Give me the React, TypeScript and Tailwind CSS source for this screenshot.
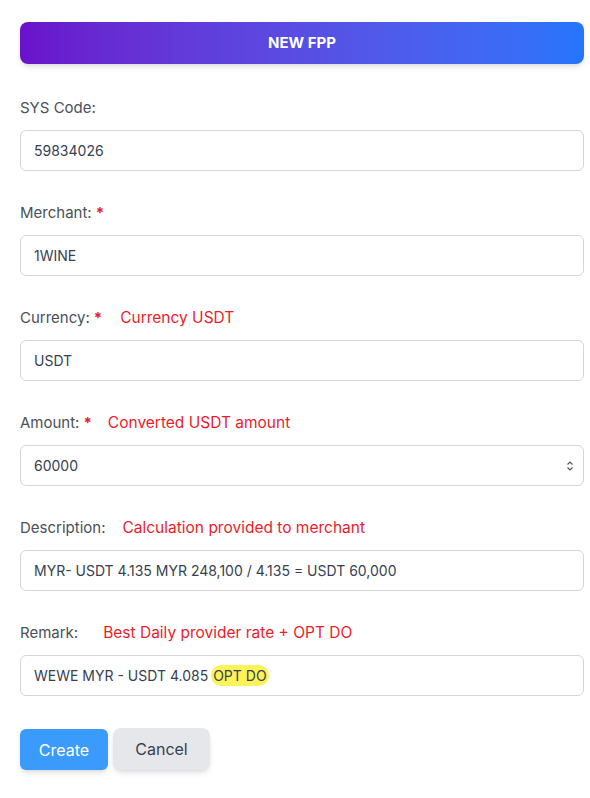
import React from 'react';

// Form for a new FPP entry with reviewer notes in red beside the labels

type Field = {
  label: string;
  required?: boolean;
  note?: string;
  noteGap?: string;
  value: string;
  spinner?: boolean;
};

const fields: Field[] = [
  { label: 'SYS Code:', value: '59834026' },
  { label: 'Merchant:', required: true, value: '1WINE' },
  { label: 'Currency:', required: true, note: 'Currency USDT', noteGap: 'ml-[18px]', value: 'USDT' },
  { label: 'Amount:', required: true, note: 'Converted USDT amount', noteGap: 'ml-[16px]', value: '60000', spinner: true },
  { label: 'Description:', note: 'Calculation provided to merchant', noteGap: 'ml-[17px]', value: 'MYR- USDT 4.135 MYR 248,100 / 4.135 = USDT 60,000' },
];

const inputClass =
  'w-full h-[41px] border border-[#d4d6da] rounded-md bg-white px-[13px] text-[14px] text-[#374151] outline-none';

const FieldLabel: React.FC<{ field: Pick<Field, 'label' | 'required' | 'note' | 'noteGap'> }> = ({ field }) => (
  <div className="flex items-center h-5 mb-3 text-[15px] text-[#4b5059]">
    <span>{field.label}</span>
    {field.required && <span className="ml-1 text-[#e5202e] font-bold">*</span>}
    {field.note && (
      <span className={`${field.noteGap} text-[15.5px] text-[#ea1d2c]`}>{field.note}</span>
    )}
  </div>
);

const Spinner = () => (
  <svg
    className="absolute right-[10px] top-1/2 -translate-y-1/2"
    width="8"
    height="12"
    viewBox="0 0 8 12"
    fill="none"
    stroke="#555"
    strokeWidth="1.2"
  >
    <path d="M1.5 4.5 L4 2 L6.5 4.5" />
    <path d="M1.5 7.5 L4 10 L6.5 7.5" />
  </svg>
);

const App: React.FC = () => {
  return (
    <div
      className="min-h-[798px] bg-white pl-5 pr-[6px] pt-[22px] pb-7"
      style={{ fontFamily: 'Inter, "Noto Sans", Arial, sans-serif' }}
    >
      <div className="h-[42px] rounded-lg bg-gradient-to-r from-[#6a11cb] to-[#2575fc] shadow-md flex items-center justify-center mb-[34px]">
        <span className="text-white font-bold text-[15px]">NEW FPP</span>
      </div>

      {fields.map((field) => (
        <div key={field.label} className="mb-8">
          <FieldLabel field={field} />
          <div className="relative">
            <input className={inputClass} readOnly defaultValue={field.value} />
            {field.spinner && <Spinner />}
          </div>
        </div>
      ))}

      <div className="mb-[33px]">
        <FieldLabel field={{ label: 'Remark:', note: 'Best Daily provider rate + OPT DO', noteGap: 'ml-[25px]' }} />
        <div className={`${inputClass} flex items-center`}>
          <span>WEWE MYR - USDT 4.085</span>
          <span className="ml-[3px] px-[2px] rounded-full bg-[#fbf357]">OPT DO</span>
        </div>
      </div>

      <div className="flex gap-[5px]">
        <button className="h-[41px] w-[88px] rounded-md bg-[#3a9bfc] text-white text-base shadow-md">
          Create
        </button>
        <button className="h-[42px] w-[97px] -mt-px rounded-lg bg-[#e5e7eb] text-[#374151] text-base shadow-md">
          Cancel
        </button>
      </div>
    </div>
  );
};

export default App;
